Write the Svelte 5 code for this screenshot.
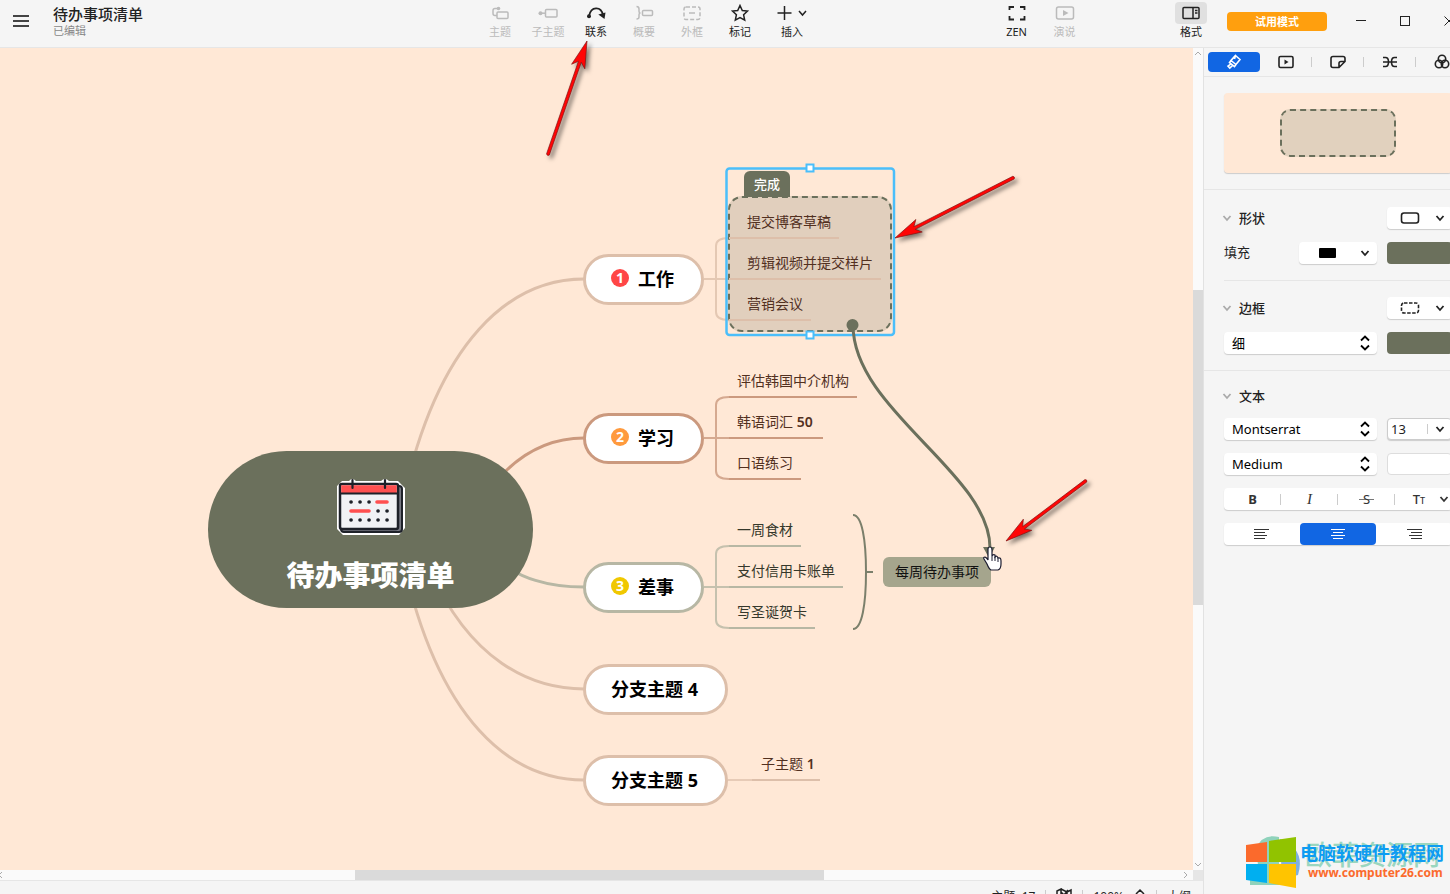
<script lang="ts">
	interface Leaf {
		text: string;
		latin?: string;
		y: number;
		end: number;
	}

	interface Branch {
		text: string;
		tone: string;
		color: string;
		x: number;
		y: number;
		width: number;
		badge?: string;
		badgeColor?: string;
		curve: string;
		leafX: number;
		leaves: Leaf[];
	}

	const branches: Branch[] = [
		{
			text: '工作', tone: 'sand', color: '#ddbfaa', x: 583, y: 206, width: 121,
			badge: '1', badgeColor: '#ff4646',
			curve: 'M403 452C438 292 510 231 584 231',
			leafX: 747,
			leaves: [
				{ text: '提交博客草稿', y: 190, end: 839 },
				{ text: '剪辑视频并提交样片', y: 231, end: 881 },
				{ text: '营销会议', y: 272, end: 811 }
			]
		},
		{
			text: '学习', tone: 'clay', color: '#cb997e', x: 583, y: 365, width: 121,
			badge: '2', badgeColor: '#ff9a3d',
			curve: 'M482 452C512 407 547 390 584 390',
			leafX: 737,
			leaves: [
				{ text: '评估韩国中介机构', y: 349, end: 857 },
				{ text: '韩语词汇', latin: '50', y: 390, end: 823 },
				{ text: '口语练习', y: 431, end: 801 }
			]
		},
		{
			text: '差事', tone: 'sage', color: '#b7b7a4', x: 583, y: 514, width: 121,
			badge: '3', badgeColor: '#f0c800',
			curve: 'M490 507C520 532 550 539 584 539',
			leafX: 737,
			leaves: [
				{ text: '一周食材', y: 498, end: 801 },
				{ text: '支付信用卡账单', y: 539, end: 843 },
				{ text: '写圣诞贺卡', y: 580, end: 815 }
			]
		},
		{
			text: '分支主题 4', tone: 'sand', color: '#ddbfaa', x: 583, y: 616, width: 145,
			curve: 'M430 522C470 612 530 641 584 641',
			leafX: 0, leaves: []
		},
		{
			text: '分支主题 5', tone: 'sand', color: '#ddbfaa', x: 583, y: 707, width: 145,
			curve: 'M403 512C438 672 510 732 584 732',
			leafX: 761,
			leaves: [{ text: '子主题', latin: '1', y: 732, end: 820 }]
		}
	];

	const tools = [
		{ id: 'topic', label: '主题', off: true },
		{ id: 'subtopic', label: '子主题', off: true },
		{ id: 'relation', label: '联系', off: false },
		{ id: 'summary', label: '概要', off: true },
		{ id: 'boundary', label: '外框', off: true },
		{ id: 'marker', label: '标记', off: false },
		{ id: 'insert', label: '插入', off: false }
	];

	const tabs = [
		{ id: 'style', label: '样式' },
		{ id: 'slide', label: '演示' },
		{ id: 'sticker', label: '画布' },
		{ id: 'structure', label: '结构' },
		{ id: 'theme', label: '配色' }
	];

	// tip x, tip y, angle in degrees, shaft length
	const arrows = [
		[587, 41, 109, 120],
		[895, 238, -27, 133],
		[1006, 541, -37, 100]
	];

	let tab = $state('style');
	let align = $state('center');
	let fontSize = $state('13');
</script>

{#snippet chevron()}
	<svg class="chevron" width="10" height="10" viewBox="0 0 10 10"><path d="M1.500 3l3.500 4 3.500-4" /></svg>
{/snippet}

{#snippet updown()}
	<svg class="updown" width="12" height="16" viewBox="0 0 12 16"><path d="M2 5.500l4-4 4 4M2 10.500l4 4 4-4" /></svg>
{/snippet}

{#snippet toolIcon(id: string)}
	<svg class="icon" width={id === 'insert' ? 32 : 20} height="18" viewBox="0 0 {id === 'insert' ? 32 : 20} 18">
		{#if id === 'topic'}
			<rect x="7" y="8" width="11" height="6.500" rx="1" /><path d="M7 11.500H5Q3 11.500 3 9.500V6.500Q3 4.500 5 4.500H8" /><circle class="dot" cx="8.500" cy="4.500" r="1.800" />
		{:else if id === 'subtopic'}
			<rect x="7.500" y="5.500" width="11.500" height="7.500" rx="1" /><path d="M2 9.200h5" /><circle class="dot" cx="2.500" cy="9.200" r="2" />
		{:else if id === 'relation'}
			<path d="M3 12C5 2 15 2 17 11" stroke-width="1.800" /><circle class="dot" cx="3" cy="12.300" r="2" /><path class="dot" d="M12.300 10.500L19.500 8.500l-1 6.500z" />
		{:else if id === 'summary'}
			<path d="M2.500 2.500Q5 2.500 5 5V7Q5 9 6.500 9Q5 9 5 11V13Q5 15 2.500 15" /><rect x="8.500" y="6.500" width="10" height="5" rx="1" />
		{:else if id === 'boundary'}
			<rect x="2" y="3" width="16" height="12.500" rx="2" stroke-dasharray="4 2" /><path d="M7 9h6" />
		{:else if id === 'marker'}
			<path d="M10 1.500l2.300 5 5.200.6-3.900 3.700 1.100 5.300L10 13.500l-4.700 2.600 1.100-5.300L2.500 7.100l5.200-.6z" />
		{:else if id === 'insert'}
			<path d="M1.500 9h14M8.500 2v14M23 7l3.500 4 3.500-4" />
		{:else if id === 'zen'}
			<path d="M2.500 6V3H7M13 3H17.500V6M17.500 12V15.500H13M7 15.500H2.500V12" stroke-width="1.800" />
		{:else if id === 'play'}
			<rect x="1.500" y="3" width="17" height="12" rx="2" /><path class="dot" d="M8 6l5.500 3-5.500 3z" />
		{:else if id === 'format'}
			<rect x="2" y="3.500" width="16" height="11" rx="1" /><path d="M12 3.500v11M14 6.500h2.500M14 9h2.500" />
		{/if}
	</svg>
{/snippet}

{#snippet tabIcon(id: string)}
	<svg class="icon" width="16" height="16" viewBox="0 0 16 16">
		{#if id === 'style'}
			<path d="M9.500 1.500l4.500 4-4 5-5-4zM5 6.500L3.500 8.500l5 4L10 10.500M5 9.800L2 12l1.800 2L6.500 11.500M9.500 1.500L8.500 5" />
		{:else if id === 'slide'}
			<rect x="1" y="2.500" width="14" height="11" rx="1.500" /><path class="dot" d="M6.500 5.500l4 2.500-4 2.500z" />
		{:else if id === 'sticker'}
			<path d="M3 2.500H13Q15 2.500 15 4.500V7.500L9 13.500H3Q1 13.500 1 11.500V4.500Q1 2.500 3 2.500zM9 13V9.500Q9 7.500 11 7.500H15" />
		{:else if id === 'structure'}
			<path d="M1 3.500H3.500Q6.500 3.500 6.500 8T3.500 12.500H1M1 8H15M15 3.500H12.500Q9.500 3.500 9.500 8T12.500 12.500H15" />
		{:else}
			<circle cx="8" cy="5" r="3.700" /><circle cx="5" cy="10" r="3.700" /><circle cx="11" cy="10" r="3.700" />
		{/if}
	</svg>
{/snippet}

<div class="app">
	<header>
		<div class="doc">
			<button class="menu" aria-label="菜单">
				<svg width="16" height="14" viewBox="0 0 16 14"><path d="M0 2h16M0 7h16M0 12h16" /></svg>
			</button>
			<div class="names">
				<h1>待办事项清单</h1>
				<p>已编辑</p>
			</div>
		</div>
		<nav class="tools">
			{#each tools as tool (tool.id)}
				<button class="tool" class:wide={tool.id === 'insert'} disabled={tool.off}>
					{@render toolIcon(tool.id)}
					<span>{tool.label}</span>
				</button>
			{/each}
		</nav>
		<div class="space"></div>
		<button class="tool">{@render toolIcon('zen')}<span>ZEN</span></button>
		<button class="tool" disabled>{@render toolIcon('play')}<span>演说</span></button>
		<div class="space small"></div>
		<div class="right">
			<button class="tool active">{@render toolIcon('format')}<span>格式</span></button>
			<button class="trial">试用模式</button>
			<div class="window">
				<button aria-label="最小化"><svg width="12" height="12" viewBox="0 0 12 12"><path d="M1 5.500h10" /></svg></button>
				<button aria-label="最大化"><svg width="12" height="12" viewBox="0 0 12 12"><rect x="1.500" y="1.500" width="9" height="9" /></svg></button>
				<button aria-label="关闭"><svg width="12" height="12" viewBox="0 0 12 12"><path d="M1.500 1.500l9 9M10.500 1.500l-9 9" /></svg></button>
			</div>
		</div>
	</header>

	<div class="body">
		<main>
			<div class="viewport">
				<div class="board">
					<svg class="lines" width="1193" height="822" viewBox="0 0 1193 822">
						{#each branches as b (b.text)}
							<path d={b.curve} stroke={b.color} stroke-width="3" />
							{#if b.leaves.length === 1}
								<path d="M728 732H752" stroke={b.color} stroke-width="2" opacity="0.7" />
								<path d="M752 732H{b.leaves[0].end}" stroke={b.color} stroke-width="2" />
							{:else if b.leaves.length}
								{@const mid = b.leaves[1].y}
								<path
									d="M704 {mid}H729M729 {mid - 41}Q716 {mid - 41} 716 {mid - 33}V{mid + 33}Q716 {mid + 41} 729 {mid + 41}"
									stroke={b.color} stroke-width="2" opacity="0.8"
								/>
							{/if}
						{/each}
						<path d="M853 467C862 467 866 492 866 524S862 581 853 581M866 524H873" stroke="#7b7f6b" stroke-width="2" />
					</svg>

					<div class="root">
						<svg width="72" height="60" viewBox="0 0 72 60">
							<path d="M7 4H14Q17 0 21 4H46Q50 0 54 4H63L70 11V51L64 58H8L2 52V9Z" fill="#fff" />
							<rect x="6" y="9" width="61" height="46" rx="3" fill="#777983" stroke="#1e2129" stroke-width="2" />
							<rect x="5" y="7" width="58" height="45" rx="2" fill="#f1f2f5" stroke="#1e2129" stroke-width="2.500" />
							<path d="M6.200 8.200H61.800V16H6.200Z" fill="#ff5050" />
							<path d="M5 16.500H63M17.500 3V11M50 3V11" stroke="#1e2129" stroke-width="2.200" stroke-linecap="round" />
							<path d="M16 25h.1M25 25h.1M34 25h.1M43 34h.1M52 34h.1M16 43h.1M25 43h.1M34 43h.1M43 43h.1M52 43h.1" stroke="#1e2129" stroke-width="3.600" stroke-linecap="round" />
							<path d="M42 25H52M16 34H34" stroke="#ff5050" stroke-width="3.600" stroke-linecap="round" />
						</svg>
						<span>待办事项清单</span>
					</div>

					<div class="boundary"></div>
					<svg class="lines" width="1193" height="822" viewBox="0 0 1193 822">
						{#each branches as b (b.text)}
							{#if b.leaves.length > 1}
								{#each b.leaves as leaf}
									<path d="M729 {leaf.y}H{leaf.end}" stroke={b.color} stroke-width="2" />
								{/each}
							{/if}
						{/each}
					</svg>
					<div class="tag">完成</div>

					{#each branches as b (b.text)}
						<div class="branch {b.tone}" style="left: {b.x}px; top: {b.y}px; width: {b.width}px">
							{#if b.badge}
								<span class="badge" style="background: {b.badgeColor}">{b.badge}</span>
							{/if}
							{b.text}
						</div>
						{#each b.leaves as leaf}
							<div class="leaf {b.tone}" style="left: {b.leafX}px; top: {leaf.y - 26}px">
								{leaf.text}{#if leaf.latin}&nbsp;<b>{leaf.latin}</b>{/if}
							</div>
						{/each}
					{/each}

					<div class="callout">每周待办事项</div>

					<svg class="lines" width="1193" height="822" viewBox="0 0 1193 822">
						<rect x="726.500" y="120.500" width="167.500" height="166.500" rx="3" stroke="#4bbefa" stroke-width="2.500" />
						<path d="M806.500 116.500h7v7h-7zM806.500 283.500h7v7h-7z" fill="#fff" stroke="#4bbefa" stroke-width="2" />
						<path d="M853 277C853 362 990 425 990 500" stroke="#6b705c" stroke-width="3" />
						<circle cx="852.500" cy="277" r="6" fill="#6b705c" />
						<path d="M983 499H995L989 510Z" fill="#6b705c" />
						<path
							d="M990 499Q992 499 992 502V508Q993 506 995 507V509Q997 507 998 510Q1001 509 1001 513V516Q1001 521 998 522H991Q989 521 987 516L984 511Q983 509 985 509Q987 510 988 512V501Q988 499 990 499Z"
							fill="#fff" stroke="#1c1c30" stroke-width="1.200"
						/>
						<path d="M992 508V513M995 509V513M998 510V514" stroke="#1c1c30" />
					</svg>
				</div>
			</div>
			<div class="vbar">
				<svg width="10" height="10" viewBox="0 0 10 10"><path d="M2 7l3-3 3 3" /></svg>
				<i></i>
				<svg width="10" height="10" viewBox="0 0 10 10"><path d="M2 3l3 3 3-3" /></svg>
			</div>
			<div class="hbar">
				<svg width="10" height="10" viewBox="0 0 10 10"><path d="M2 2L-1 5l3 3" /></svg>
				<i></i>
				<svg width="10" height="10" viewBox="0 0 10 10"><path d="M1 2l3 3-3 3" /></svg>
			</div>
			<div class="corner"></div>
			<footer>
				<div class="status">
					<span>主题: 17</span>
					<hr />
					<svg width="16" height="16" viewBox="0 0 16 16"><path d="M1 3l4-2v11l-4 2zM5 1l6 3v11l-6-3M11 4l4-2v11l-4 2M5 4l3 3 4-5" /></svg>
					<hr />
					<span>100%</span>
					<svg class="zoom" width="12" height="16" viewBox="0 0 12 16"><path d="M2 6l4-4 4 4M2 10l4 4 4-4" /></svg>
					<hr />
					<span>大纲</span>
				</div>
			</footer>
		</main>

		<aside>
			<div class="inner">
				<div class="tabs" role="tablist">
					{#each tabs as t (t.id)}
						<button role="tab" aria-label={t.label} aria-selected={tab === t.id} class:on={tab === t.id} onclick={() => (tab = t.id)}>
							{@render tabIcon(t.id)}
						</button>
					{/each}
				</div>

				<div class="preview"><div class="sample"></div></div>

				<section>
					<div class="row">
						<h2>{@render chevron()}形状</h2>
						<button class="box pick" aria-label="形状">
							<svg width="20" height="14" viewBox="0 0 20 14"><rect x="1.500" y="2" width="17" height="10" rx="2.500" fill="none" stroke="#222" stroke-width="1.600" /></svg>
							{@render chevron()}
						</button>
					</div>
					<div class="row">
						<span class="label">填充</span>
						<button class="box fill" aria-label="填充样式">
							<svg width="20" height="14" viewBox="0 0 20 14"><rect x="2" y="2" width="17" height="10" rx="1" /></svg>
							{@render chevron()}
						</button>
						<button class="swatch" aria-label="填充颜色"></button>
					</div>
				</section>

				<section class="inset">
					<div class="row">
						<h2>{@render chevron()}边框</h2>
						<button class="box pick" aria-label="边框">
							<svg width="20" height="14" viewBox="0 0 20 14"><rect x="1.500" y="2" width="17" height="10" rx="2.500" fill="none" stroke="#222" stroke-width="1.600" stroke-dasharray="3.500 1.500" /></svg>
							{@render chevron()}
						</button>
					</div>
					<div class="row">
						<label class="box drop">
							<select aria-label="边框粗细"><option>细</option></select>
							{@render updown()}
						</label>
						<button class="swatch" aria-label="边框颜色"></button>
					</div>
				</section>

				<section class="text">
					<div class="row head"><h2>{@render chevron()}文本</h2></div>
					<div class="row">
						<label class="box drop">
							<select aria-label="字体"><option>Montserrat</option></select>
							{@render updown()}
						</label>
						<div class="box size">
							<input aria-label="字号" bind:value={fontSize} />
							<button aria-label="选择字号">{@render chevron()}</button>
						</div>
					</div>
					<div class="row">
						<label class="box drop">
							<select aria-label="字重"><option>Medium</option></select>
							{@render updown()}
						</label>
						<button class="swatch white" aria-label="文本颜色"></button>
					</div>
					<div class="box group">
						<button><b>B</b></button>
						<button><i>I</i></button>
						<button class="strike"><s>S</s></button>
						<button class="case">T<small>T</small>{@render chevron()}</button>
					</div>
					<div class="box group plain">
						{#each ['left', 'center', 'right'] as side}
							<button aria-label={side} class:on={align === side} onclick={() => (align = side)}>
								<svg width="16" height="12" viewBox="0 0 16 12">
									{#if side === 'left'}
										<path d="M0 1.500h15M0 4.500h11M0 7.500h13M0 10.500h11" />
									{:else if side === 'center'}
										<path d="M1 1.500h14M3 4.500h10M1 7.500h14M3 10.500h10" />
									{:else}
										<path d="M1 1.500h15M5 4.500h11M3 7.500h13M5 10.500h11" />
									{/if}
								</svg>
							</button>
						{/each}
					</div>
				</section>
			</div>
		</aside>
	</div>

	<svg class="arrows" width="1200" height="600" viewBox="0 0 1200 600">
		{#each arrows as [x, y, angle, length]}
			<g transform="translate({x} {y}) rotate({angle})">
				<path d="M0 0L27 -7L22 -1.500H{length}Q{length + 2} 0 {length} 1.500H22L27 7Z" />
			</g>
		{/each}
	</svg>

	<div class="watermark">
		<svg width="54" height="54" viewBox="0 0 54 54">
			<path d="M10 14Q16 -2 33 2V50H4V42Q14 44 12 30Z" fill="#8fd2bb" />
			<path d="M34 4Q60 14 52 40L36 44Z" fill="#7fb0de" />
			<path d="M0 10L21 7V27H0Z" fill="#fb6a2c" />
			<path d="M23 6L50 2V27H23Z" fill="#91c300" />
			<path d="M0 29H21V48L0 45Z" fill="#00aff0" />
			<path d="M23 29H50V53L23 48Z" fill="#ffc400" />
		</svg>
		<div class="site">
			<span class="ghost">欧菲资源网</span>
			<strong>电脑软硬件教程网</strong>
			<em>www.computer26.com</em>
		</div>
	</div>
</div>

<style>
	:global(body) {
		overflow: hidden;
	}

	.app {
		position: relative;
		display: flex;
		flex-direction: column;
		height: 100vh;
		overflow: hidden;
		background: #f5f5f5;
		color: #222;
		font-family: 'Noto Sans', 'Noto Sans CJK SC', sans-serif;
		font-size: 13px;
	}

	button, input, select {
		margin: 0;
		padding: 0;
		border: none;
		background: none;
		color: inherit;
		font: inherit;
	}

	h1, h2, p {
		margin: 0;
	}

	svg {
		flex: none;
		fill: none;
		stroke: currentColor;
	}

	/* Header */
	header {
		display: flex;
		flex: none;
		height: 47px;
		border-bottom: 1px solid #e6e6e6;
		overflow: hidden;
	}

	.doc {
		display: flex;
		flex: 59 1 0;
		align-items: flex-start;
		gap: 24px;
		padding-left: 13px;
	}

	.menu {
		display: flex;
		padding-top: 14px;
		color: #444;
	}

	.menu svg {
		stroke-width: 2;
	}

	.names {
		padding-top: 5px;
	}

	h1 {
		font-size: 15px;
		font-weight: 500;
		line-height: 18px;
	}

	.names p {
		color: #888;
		font-size: 11px;
		line-height: 15px;
	}

	.tools {
		display: flex;
	}

	.tool {
		display: flex;
		flex: none;
		flex-direction: column;
		align-items: center;
		width: 48px;
		padding-top: 2px;
		font-size: 11px;
		line-height: 16px;
	}

	.tool .icon {
		padding: 2px 6px;
		border-radius: 4px;
		stroke-width: 1.5;
	}

	.tool:disabled {
		color: #bbb;
	}

	.tool.wide {
		width: 56px;
	}

	.tool.active .icon {
		background: #e0e0e0;
	}

	.icon .dot {
		fill: currentColor;
		stroke: none;
	}

	.space {
		flex: 22 1 0;
	}

	.space.small {
		flex: 10 1 0;
	}

	.right {
		display: flex;
		flex: none;
		align-items: flex-start;
		width: 283px;
	}

	.trial {
		flex: none;
		width: 100px;
		height: 19px;
		margin: 12px 12px 0;
		border-radius: 4px;
		background: #ff9f0e;
		color: #fff;
		font-size: 11px;
		font-weight: 700;
		line-height: 19px;
	}

	.window {
		display: flex;
	}

	.window button {
		display: grid;
		place-items: center;
		flex: none;
		width: 44px;
		height: 42px;
	}

	/* Canvas */
	.body {
		display: flex;
		flex: 1;
		min-height: 0;
	}

	main {
		display: grid;
		grid-template-columns: minmax(0, 1fr) 10px;
		grid-template-rows: minmax(0, 1fr) 10px 14px;
		flex: 1;
		min-width: 0;
	}

	.viewport {
		overflow: hidden;
		background: #ffe8d6;
	}

	.board {
		position: relative;
	}

	.lines {
		position: absolute;
		top: 0;
		left: 0;
		stroke: none;
	}

	.root {
		position: absolute;
		top: 403px;
		left: 208px;
		display: flex;
		flex-direction: column;
		align-items: center;
		gap: 20px;
		width: 325px;
		height: 157px;
		padding-top: 26px;
		box-sizing: border-box;
		border-radius: 80px;
		background: #6b705c;
		color: #fff;
		font-size: 28px;
		font-weight: 900;
		line-height: 36px;
	}

	.root svg {
		stroke: none;
	}

	.branch {
		position: absolute;
		display: flex;
		align-items: center;
		justify-content: center;
		gap: 9px;
		height: 51px;
		padding: 0 2px 3px 0;
		box-sizing: border-box;
		border: 3px solid;
		border-radius: 26px;
		background: #fff;
		color: #000;
		font-size: 18px;
		font-weight: 700;
		white-space: nowrap;
	}

	.branch.sand {
		border-color: #ddbfaa;
	}

	.branch.clay {
		border-color: #cb997e;
	}

	.branch.sage {
		border-color: #b7b7a4;
	}

	.badge {
		width: 18px;
		height: 18px;
		border-radius: 9px;
		color: #fff;
		font-size: 14px;
		line-height: 18px;
		text-align: center;
	}

	.leaf {
		position: absolute;
		color: #52301f;
		font-size: 14px;
		font-weight: 400;
		line-height: 20px;
		white-space: nowrap;
	}

	.leaf b {
		font-weight: 600;
	}

	.leaf.sage {
		color: #35382c;
	}

	.boundary {
		position: absolute;
		top: 148px;
		left: 728px;
		width: 164px;
		height: 136px;
		box-sizing: border-box;
		border: 2px dashed #6b705c;
		border-radius: 14px;
		background: rgba(107, 112, 92, 0.2);
	}

	.tag {
		position: absolute;
		top: 123px;
		left: 744px;
		width: 46px;
		height: 26px;
		border-radius: 6px 6px 0 0;
		background: #6b705c;
		color: #fff;
		font-size: 13px;
		font-weight: 500;
		line-height: 26px;
		text-align: center;
	}

	.callout {
		position: absolute;
		top: 509px;
		left: 883px;
		width: 108px;
		height: 30px;
		border-radius: 6px;
		background: #a5a58d;
		color: #111;
		font-size: 14px;
		line-height: 30px;
		text-align: center;
	}

	.vbar, .hbar {
		display: grid;
		background: #fafafa;
		color: #aaa;
	}

	.vbar {
		grid-template-rows: 10px 232fr 315fr 255fr 10px;
	}

	.vbar i {
		grid-row: 3;
		background: #dadada;
	}

	.vbar svg:last-child {
		grid-row: 5;
	}

	.hbar {
		grid-template-columns: 10px 345fr 469fr 359fr 10px;
	}

	.hbar i {
		grid-column: 3;
		background: #dadada;
	}

	.hbar svg:last-child {
		grid-column: 5;
	}

	.corner {
		background: #e6e6e6;
	}

	footer {
		grid-column: 1 / -1;
		overflow: hidden;
		border-top: 1px solid #e6e6e6;
	}

	.status {
		display: flex;
		align-items: center;
		justify-content: flex-end;
		gap: 10px;
		height: 30px;
		padding-right: 12px;
		font-size: 12px;
	}

	.status hr {
		width: 1px;
		height: 12px;
		margin: 0;
		border: none;
		background: #ccc;
	}

	.status svg {
		stroke-width: 1.5;
	}

	/* Format panel */
	aside {
		flex: none;
		width: 246px;
		border-left: 1px solid #e2e2e2;
		overflow: hidden;
	}

	.inner {
		width: 268px;
	}

	.tabs {
		display: flex;
		padding: 4px;
		border-bottom: 1px solid #e6e6e6;
	}

	.tabs button {
		display: grid;
		place-items: center;
		flex: none;
		width: 52px;
		height: 20px;
		background: linear-gradient(#ccc, #ccc) right center / 1px 10px no-repeat;
	}

	.tabs .icon {
		stroke-width: 1.6;
	}

	.tabs .on {
		border-radius: 4px;
		background: #1166e3;
		color: #fff;
	}

	.preview {
		display: grid;
		place-items: center;
		height: 80px;
		margin: 16px 20px;
		border-radius: 4px;
		background: #ffe8d6;
		box-shadow: 0 1px 1px #ccc;
	}

	.sample {
		width: 116px;
		height: 48px;
		box-sizing: border-box;
		border: 2px dashed #6b705c;
		border-radius: 10px;
		background: #e1d1be;
	}

	section {
		display: flex;
		flex-direction: column;
		gap: 13px;
		padding: 17px 20px 16px;
		border-top: 1px solid #e6e6e6;
	}

	.inset {
		margin: 0 20px;
		padding: 16px 0;
	}

	.text {
		padding-top: 16px;
	}

	.row {
		display: flex;
		align-items: center;
		gap: 10px;
		height: 22px;
	}

	.row.head {
		height: 18px;
	}

	h2 {
		display: flex;
		flex: 1;
		align-items: center;
		gap: 7px;
		margin-left: -2px;
		font-size: 13px;
		font-weight: 500;
		line-height: 20px;
	}

	h2 .chevron {
		color: #aaa;
	}

	.label {
		flex: 1;
		line-height: 20px;
		padding-bottom: 2px;
	}

	.chevron, .updown {
		stroke-width: 1.8;
	}

	.box {
		display: flex;
		align-items: center;
		height: 22px;
		box-sizing: border-box;
		border-radius: 4px;
		background: #fff;
		box-shadow: 0 1px 1px #ccc;
	}

	.pick {
		gap: 15px;
		width: 65px;
		padding-left: 13px;
	}

	.fill {
		gap: 23px;
		width: 78px;
		padding-left: 18px;
	}

	.fill svg:first-child {
		fill: #000;
		stroke: none;
	}

	.swatch {
		width: 65px;
		height: 22px;
		border-radius: 4px;
		background: #6b705c;
	}

	.swatch.white {
		border: 1px solid #ddd;
		background: #fff;
	}

	.drop {
		flex: 1;
		padding-right: 6px;
		color: #000;
	}

	.drop select {
		flex: 1;
		min-width: 0;
		height: 22px;
		padding-left: 8px;
		appearance: none;
		outline: none;
	}

	.size {
		width: 65px;
		border: 1px solid #ccc;
	}

	.size input {
		width: 39px;
		padding-left: 3px;
		box-sizing: border-box;
		outline: none;
	}

	.size button {
		display: flex;
		padding-left: 7px;
		border-left: 1px solid #ccc;
	}

	.group button {
		display: flex;
		align-items: center;
		justify-content: center;
		flex: 1 1 0;
		height: 22px;
		color: #333;
		background: linear-gradient(#ccc, #ccc) right center / 1px 11px no-repeat;
	}

	.group.plain button, .group button:last-child {
		background: none;
	}

	.group i {
		font-family: 'Liberation Serif', serif;
		font-size: 15px;
	}

	.group s {
		padding: 0 4px;
		text-decoration: none;
		background: linear-gradient(#777, #777) center / 100% 1px no-repeat;
	}

	.group small {
		padding-top: 3px;
		font-size: 9px;
	}

	.group .case {
		justify-content: flex-end;
		font-weight: 500;
	}

	.group .case .chevron {
		margin: 0 3px 0 14px;
	}

	.group.plain .on {
		border-radius: 4px;
		background: #1166e3;
		color: #fff;
	}

	/* Overlays */
	.arrows {
		position: absolute;
		top: 0;
		left: 0;
		stroke: #7a1010;
		stroke-width: 0.6;
		fill: #ff0505;
		filter: drop-shadow(3px 3px 2px rgba(0, 0, 0, 0.5));
		pointer-events: none;
	}

	.watermark {
		position: absolute;
		right: 6px;
		bottom: 5px;
		display: flex;
		align-items: center;
		pointer-events: none;
	}

	.watermark svg {
		stroke: none;
	}

	.site {
		position: relative;
		display: flex;
		flex-direction: column;
		width: 144px;
	}

	.site strong {
		position: relative;
		color: #0d9cf2;
		font-size: 18px;
		line-height: 22px;
		white-space: nowrap;
	}

	.site em {
		position: relative;
		padding-left: 8px;
		color: #fb6a2c;
		font-size: 12px;
		font-style: normal;
		font-weight: 700;
		line-height: 18px;
	}

	.ghost {
		position: absolute;
		top: 0;
		left: 5px;
		color: #9ad6bf;
		font-size: 27px;
		font-weight: 500;
		line-height: 26px;
		white-space: nowrap;
	}
</style>
